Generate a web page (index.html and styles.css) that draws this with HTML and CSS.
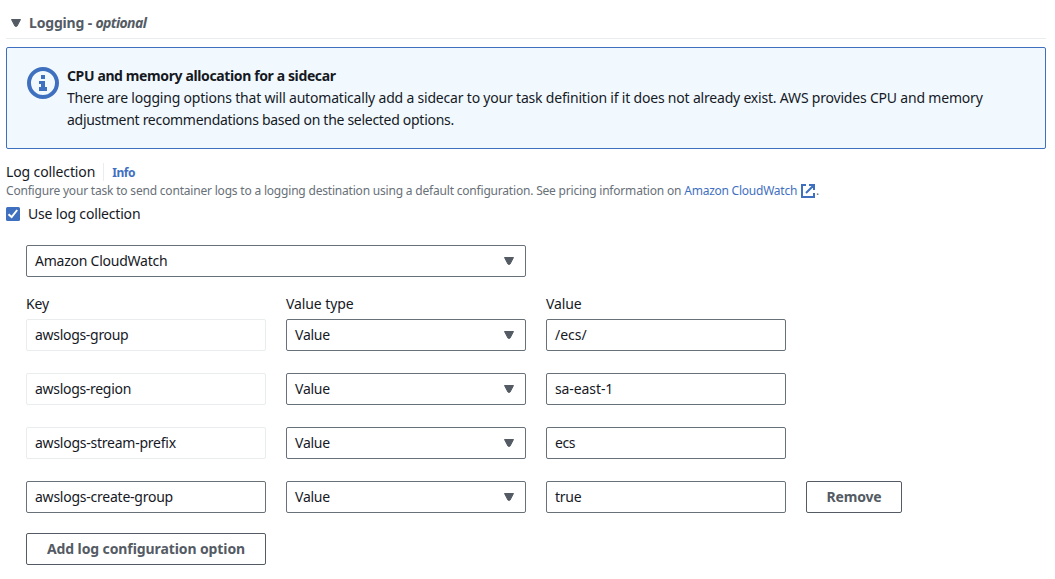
FILE: index.html
```html
<!DOCTYPE html>
<html lang="en">
<head>
<meta charset="utf-8">
<title>Logging</title>
<link rel="stylesheet" href="styles.css">
</head>
<body>
<svg class="defs" width="0" height="0" aria-hidden="true">
  <symbol id="caret" viewBox="0 0 10 8"><path d="M.5.5h9L6 7.2H4z" fill="#545b64" stroke="#545b64" stroke-linejoin="round"/></symbol>
</svg>
<main class="page">
  <header class="section-header">
    <svg class="caret"><use href="#caret"/></svg>
    <h2 class="section-title">Logging - <em class="optional">optional</em></h2>
  </header>

  <section class="alert">
    <svg class="alert-icon" viewBox="0 0 32 32"><circle cx="16" cy="16" r="14" fill="none" stroke="#3f70bf" stroke-width="4"/><path d="M14 8h4v4h-4zM12 14h6v6h2v4h-8v-4h2v-3h-2z" fill="#3f70bf"/></svg>
    <div class="alert-body">
      <div class="alert-title">CPU and memory allocation for a sidecar</div>
      <div class="alert-text"><span class="line-one">There are logging options that will automatically add a sidecar to your task definition if it does not already exist. AWS provides CPU and memory</span><br><span class="line-two">adjustment recommendations based on the selected options.</span></div>
    </div>
  </section>

  <div class="label-row"><span class="label">Log collection</span><a class="info">Info</a></div>
  <div class="description"><span class="desc-text">Configure your task to send container logs to a logging destination using a default configuration. See pricing information on</span><a class="link">Amazon CloudWatch</a><svg class="external" viewBox="0 0 14 14"><path d="M5 1H1v12h12V9M8 1h5v5M13 1 5 9" fill="none" stroke="#3f70bf" stroke-width="2"/></svg><span>.</span></div>
  <label class="check-row">
    <svg class="checkbox" viewBox="0 0 14 14"><rect width="14" height="14" rx="1.5" fill="#3f70bf"/><path d="M2.5 7.2 5.6 10l5.6-7" fill="none" stroke="#fff" stroke-width="2"/></svg>
    <span class="check-label">Use log collection</span>
  </label>

  <div class="form">
    <div class="field select destination"><span>Amazon CloudWatch</span><svg class="caret"><use href="#caret"/></svg></div>
    <div class="row heads"><span>Key</span><span>Value type</span><span>Value</span></div>
    <div class="rows">
      <div class="row">
        <div class="field disabled"><span class="key">awslogs-group</span></div>
        <div class="field select"><span>Value</span><svg class="caret"><use href="#caret"/></svg></div>
        <div class="field"><span class="path">/ecs/</span></div>
      </div>
      <div class="row">
        <div class="field disabled"><span class="key">awslogs-region</span></div>
        <div class="field select"><span>Value</span><svg class="caret"><use href="#caret"/></svg></div>
        <div class="field"><span class="region">sa-east-1</span></div>
      </div>
      <div class="row">
        <div class="field disabled"><span>awslogs-stream-prefix</span></div>
        <div class="field select"><span>Value</span><svg class="caret"><use href="#caret"/></svg></div>
        <div class="field"><span class="short">ecs</span></div>
      </div>
      <div class="row">
        <div class="field"><span>awslogs-create-group</span></div>
        <div class="field select"><span>Value</span><svg class="caret"><use href="#caret"/></svg></div>
        <div class="field"><span>true</span></div>
        <button class="button remove">Remove</button>
      </div>
    </div>
    <button class="button add">Add log configuration option</button>
  </div>
</main>
</body>
</html>
```
FILE: styles.css
```css
* { box-sizing: border-box; }
body { margin: 0; background: #fff; color: #16191f; font: 14px/22px "Noto Sans", "Open Sans", sans-serif; letter-spacing: -0.24px; }
.defs { display: block; }
.page { padding: 8px 9px 0 6px; white-space: nowrap; }
.caret { display: block; flex: none; width: 10px; height: 8px; }
.section-header { display: flex; align-items: center; height: 31px; padding-left: 5px; border-bottom: 1px solid #eaeded; gap: 8px; color: #545b64; }
.section-title { margin: 0; font-size: 14px; font-weight: 700; letter-spacing: -0.17px; }
.optional { letter-spacing: -0.6px; }
.alert { display: flex; gap: 8px; height: 102px; margin-top: 8px; padding: 17px 20px; border: 1px solid #3f70bf; border-radius: 2px; background: #f1f9ff; }
.alert-icon { flex: none; width: 32px; height: 32px; margin-top: 2px; }
.alert-title { font-weight: 700; letter-spacing: -0.38px; }
.line-one { letter-spacing: -0.195px; }
.line-two { letter-spacing: -0.29px; }
.label-row { display: flex; align-items: center; margin-top: 12px; }
.label { letter-spacing: -0.12px; }
.info { margin-left: 8px; padding: 1px 0 0 8px; border-left: 1px solid #eaeded; color: #3f70bf; font-size: 12px; font-weight: 700; line-height: 17px; letter-spacing: -0.45px; }
.description { display: flex; align-items: center; height: 16px; color: #687078; font-size: 12px; line-height: 16px; }
.desc-text { letter-spacing: -0.195px; }
.link { margin-left: 3px; color: #3f70bf; }
.external { width: 14px; height: 14px; margin: 0 1px 0 4px; }
.check-row { display: flex; align-items: center; gap: 8px; height: 22px; margin-top: 4px; }
.checkbox { width: 14px; height: 14px; }
.check-label { letter-spacing: -0.18px; }
.form { padding: 20px 0 0 20px; }
.field { display: flex; align-items: center; justify-content: space-between; height: 32px; padding: 0 8px; border: 1px solid #687078; border-radius: 2px; }
.disabled { border-color: #eaeded; }
.select { padding-right: 11px; }
.destination { width: 500px; }
.rows { display: grid; gap: 22px; }
.row { display: grid; grid-template-columns: 240px 240px 240px 96px; gap: 20px; }
.heads { margin: 16px 0 4px; letter-spacing: -0.1px; }
.key { letter-spacing: -0.3px; }
.path { letter-spacing: 0; }
.region { letter-spacing: -0.1px; }
.short { letter-spacing: -0.4px; }
.button { height: 32px; padding: 0; border: 1px solid #545b64; border-radius: 2px; background: #fff; color: #545b64; font: 700 14px/22px "Noto Sans", "Open Sans", sans-serif; letter-spacing: -0.1px; }
.remove { letter-spacing: -0.2px; }
.add { display: block; width: 240px; margin-top: 20px; }
```
